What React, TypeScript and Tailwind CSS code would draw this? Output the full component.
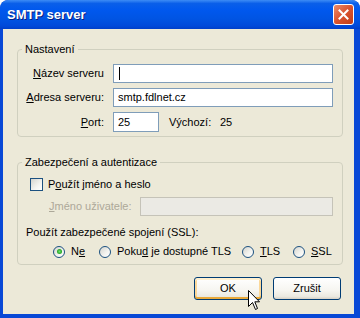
import React from 'react';

const Radio: React.FC<{ checked?: boolean }> = ({ checked }) => (
  <span className="w-[12px] h-[12px] rounded-full border border-[#1c5180] bg-[linear-gradient(135deg,#d4d4ce_0%,#f4f4f0_60%,#ffffff_100%)] flex items-center justify-center shrink-0">
    {checked && <span className="w-[5px] h-[5px] rounded-full bg-[radial-gradient(circle,#6ee36e_0%,#21a121_70%)]" />}
  </span>
);

const App: React.FC = () => {
  return (
    <div className="relative w-[360px] h-[318px] flex flex-col bg-[#0848d6] rounded-t-[8px] overflow-hidden font-['Liberation_Sans',Arial,sans-serif] text-[11px] leading-[13px] text-black">
      {/* title bar */}
      <div className="h-[29px] shrink-0 flex items-center justify-between pl-[7px] pr-[6px] rounded-t-[8px] bg-[linear-gradient(180deg,#3d8cf5_0%,#0a5fe9_12%,#0058ee_35%,#0054e3_65%,#0049d9_90%,#003fc9_100%)]">
        <span className="text-white font-bold text-[13px] leading-[16px] [text-shadow:1px_1px_0_#0a1e80]">SMTP server</span>
        <span className="w-[21px] h-[21px] rounded-[3px] border border-white bg-[linear-gradient(135deg,#eb8d6c_0%,#d9532f_50%,#c23d16_100%)] flex items-center justify-center">
          <svg width="11" height="11" viewBox="0 0 11 11">
            <path d="M1.5 1.5 L9.5 9.5 M9.5 1.5 L1.5 9.5" stroke="white" strokeWidth="2" strokeLinecap="square" />
          </svg>
        </span>
      </div>

      {/* body */}
      <div className="flex-1 ml-[3px] mr-[6px] mb-[4px] bg-[#ece9d8] pl-[14px] pt-[14px] flex flex-col">
        <fieldset className="w-[326px] border border-[#d0d0bf] rounded-[4px] pb-[4px] flex flex-col">
          <legend className="ml-[4px] px-[3px]">Nastavení</legend>
          <div className="flex flex-col gap-[5px] mt-[8px]">
            <div className="flex items-center">
              <span className="w-[86px] text-right"><u>N</u>ázev serveru</span>
              <div className="ml-[9px] w-[220px] h-[19px] border border-[#7f9db9] bg-white flex items-center pl-[5px]">
                <span className="w-[1px] h-[13px] bg-black" />
              </div>
            </div>
            <div className="flex items-center">
              <span className="w-[86px] text-right"><u>A</u>dresa serveru:</span>
              <div className="ml-[9px] w-[220px] h-[19px] border border-[#7f9db9] bg-white flex items-center pl-[4px]">
                smtp.fdlnet.cz
              </div>
            </div>
            <div className="flex items-center">
              <span className="w-[86px] text-right"><u>P</u>ort:</span>
              <div className="ml-[9px] w-[46px] h-[20px] border border-[#7f9db9] bg-white flex items-center pl-[4px]">25</div>
              <span className="ml-[10px] w-[51px]">Výchozí:</span>
              <span>25</span>
            </div>
          </div>
        </fieldset>

        <fieldset className="w-[326px] mt-[19px] border border-[#d0d0bf] rounded-[4px] pb-[6px] flex flex-col">
          <legend className="ml-[4px] px-[3px]">Zabezpečení a autentizace</legend>
          <div className="flex items-center mt-[9px] pl-[12px] h-[13px]">
            <span className="w-[13px] h-[13px] border border-[#1c5180] bg-[linear-gradient(135deg,#d4d4ce_0%,#f4f4f0_60%,#ffffff_100%)]" />
            <span className="ml-[5px]">P<u>o</u>užít jméno a heslo</span>
          </div>
          <div className="flex items-center mt-[6px] pl-[31px]">
            <span className="w-[91px] text-[#aca899]"><u>J</u>méno uživatele:</span>
            <div className="w-[193px] h-[19px] border border-[#c5c3b8] bg-[#ebeae4]" />
          </div>
          <div className="mt-[10px] pl-[8px]">Použít zabezpečené spojení (SSL):</div>
          <div className="flex items-center mt-[6px] pl-[35px] h-[13px]">
            <div className="w-[46px] flex items-center gap-[6px]">
              <Radio checked />
              <span>N<u>e</u></span>
            </div>
            <div className="w-[143px] flex items-center gap-[6px]">
              <Radio />
              <span>Poku<u>d</u> je dostupné TLS</span>
            </div>
            <div className="w-[51px] flex items-center gap-[6px]">
              <Radio />
              <span><u>T</u>LS</span>
            </div>
            <div className="flex items-center gap-[6px]">
              <Radio />
              <span><u>S</u>SL</span>
            </div>
          </div>
        </fieldset>

        <div className="w-[324px] flex justify-end gap-[11px] mt-[12px]">
          <button className="w-[68px] h-[23px] rounded-[3px] border border-[#003c74] bg-[linear-gradient(180deg,#ffffff_0%,#f6f5f0_60%,#ebe9e0_88%,#e0dccf_100%)] shadow-[inset_0_-2px_0_#e9a93a,inset_0_2px_0_#fff0cf,inset_2px_0_0_#fbd89a,inset_-2px_0_0_#fbd89a]">
            OK
          </button>
          <button className="w-[68px] h-[23px] rounded-[3px] border border-[#003c74] bg-[linear-gradient(180deg,#ffffff_0%,#f6f5f0_60%,#ebe9e0_88%,#d6d0c5_100%)]">
            Zrušit
          </button>
        </div>
      </div>

      {/* mouse pointer */}
      <svg className="absolute left-[248px] top-[290px]" width="12" height="20" viewBox="0 0 12 20">
        <path d="M0.5 0.5 L0.5 16.5 L4.5 12.5 L7.5 19.5 L9.5 18.5 L6.8 11.8 L11.5 11.8 Z" fill="white" stroke="black" strokeWidth="1" />
      </svg>
    </div>
  );
};

export default App;
